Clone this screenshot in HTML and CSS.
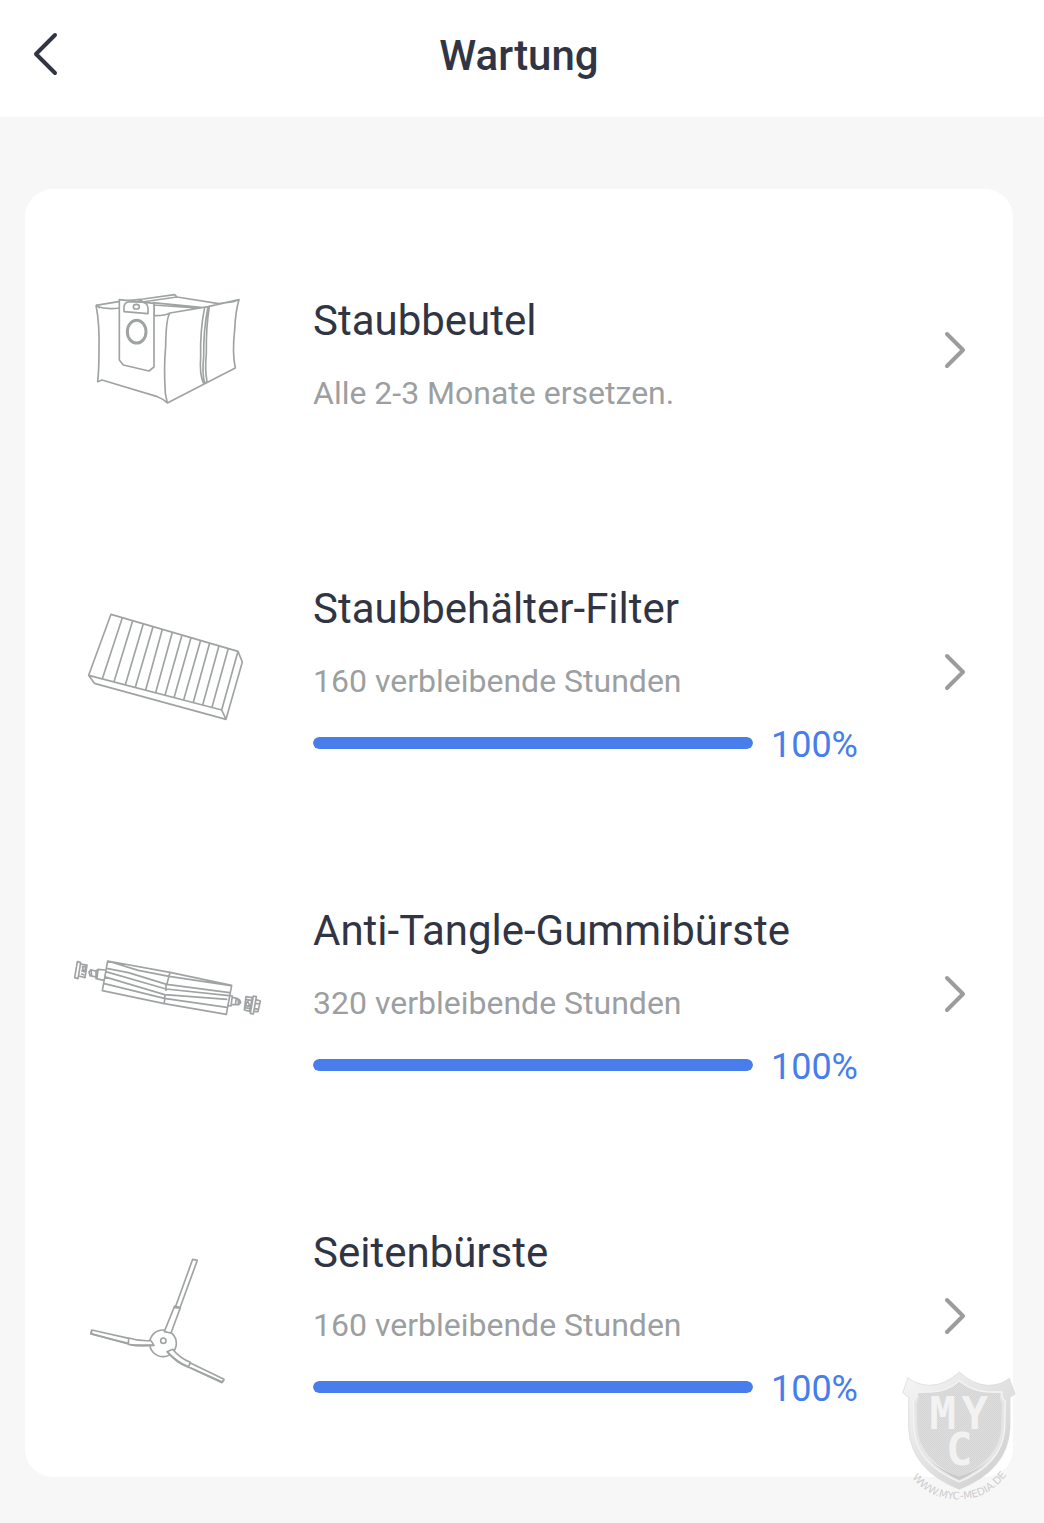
FILE: index.html
```html
<!DOCTYPE html>
<html lang="de">
<head>
    <meta charset="UTF-8">
    <meta name="viewport" content="width=device-width, initial-scale=1.0">
    <title>Wartung</title>
    <link rel="stylesheet" href="styles.css">
</head>
<body>
    <header class="header">
        <button type="button" class="back-btn" aria-label="Zurück">
            <svg width="26" height="44" viewBox="0 0 26 44"><path d="M23 3 L4 22 L23 41"/></svg>
        </button>
        <h1>Wartung</h1>
    </header>

    <main class="card">
        <!-- Dust bag -->
        <a href="#staubbeutel" class="item">
            <svg class="item-icon" viewBox="0 0 600 480">
                <g transform="translate(36 30)">
                    <path d="M48 76 Q59 130 57 210 Q57 270 53 305 L66 300 L232 350 Q252 358 262 369 L374 311 L466 264 Q456 220 464 150 Q466 95 477 59 L384 80 L270 99 Q253 108 222 107 M48 76 L120 64 M50 79 Q78 90 120 84 M48 74 L60 84 M222 107 L222 70 M120 64 L190 57 L284 44 L291 51 L186 66 M291 51 L416 71 L460 65 L477 59 M218 68 L370 83 M220 75 L350 84 M172 59 L188 62 M270 99 Q258 112 257 200 Q251 260 256 340 L262 369"/>
                    <path d="M384 80 Q370 150 371 230 Q366 280 374 311 M374 82 Q360 150 362 230 Q358 285 371 311 M374 311 L381 304 Q374 270 379 220 Q378 140 388 80"/>
                    <path class="filled" d="M118 59 L118 240 L130 255 L207 273 L222 261 L222 70 Z"/>
                    <path d="M132 95 L132 80 Q134 66 148 66 L184 66 Q202 67 204 84 L204 101 Z"/>
                    <ellipse cx="169" cy="80" rx="9" ry="7"/>
                    <ellipse class="ring" cx="170" cy="155" rx="28" ry="34"/>
                </g>
            </svg>
            <div class="item-body">
                <h2>Staubbeutel</h2>
                <p>Alle 2-3 Monate ersetzen.</p>
            </div>
            <svg class="chevron" viewBox="0 0 24 40"><path d="M4 4 L20 20 L4 36"/></svg>
        </a>

        <!-- Filter -->
        <a href="#filter" class="item">
            <svg class="item-icon" viewBox="0 0 600 480">
                <g transform="translate(21 24)">
                    <path d="M108 43 L489 154 L502 186 L453 358 L58 250 L41 226 Z M41 226 L440 330 L453 358 M489 154 L440 330"/>
                    <path d="M142 53 L82 236 M173 62 L117 245 M205 71 L151 254 M234 80 L181 262 M262 88 L212 270 M292 97 L242 278 M321 105 L270 286 M348 113 L297 293 M377 121 L326 300 M404 129 L355 307 M432 137 L383 315 M460 145 L411 322"/>
                </g>
            </svg>
            <div class="item-body">
                <h2>Staubbehälter-Filter</h2>
                <p id="filterLabel">160 verbleibende Stunden</p>
                <div class="level">
                    <progress value="100" max="100" aria-labelledby="filterLabel"></progress>
                    <span>100%</span>
                </div>
            </div>
            <svg class="chevron" viewBox="0 0 24 40"><path d="M4 4 L20 20 L4 36"/></svg>
        </a>

        <!-- Main brush -->
        <a href="#gummibuerste" class="item">
            <svg class="item-icon" viewBox="0 0 600 480">
                <g transform="translate(-9 93)">
                    <path d="M128 48 L315 82 L500 121 L484 208 L298 176 L112 137 Z M128 48 L220 76 L312 94 L498 122 M315 82 L305 120 M125 70 L190 83 L305 118 L494 143 M122 80 L303 132 L492 152 M117 95 L299 149 L487 163 M115 115 L298 160 L486 187 M303 118 L303 138 M300 148 L298 176"/>
                    <path d="M121 75 L99 73 L93 78 L93 101 L117 106 M93 79 L78 74 L72 81 L75 92 L93 96 M99 73 L96 100 M78 74 L80 92"/>
                    <path d="M37 50 L47 53 L39 101 L29 98 Z M47 57 L66 60 L60 98 L41 93 M51 64 L62 65 L60 77 L50 75 M49 78 L60 81 M48 86 L58 90 M52 64 L56 80"/>
                    <path d="M492 151 L502 153 L498 183 L487 181 M502 157 L516 160 L524 165 L527 172 L521 179 L501 179 M514 160 L511 179 M518 162 L522 176 M523 166 L519 177"/>
                    <path d="M543 155 L562 158 L554 199 L538 195 Z M543 163 L558 166 M548 168 L555 184 L541 182 Z M540 188 L555 191 M565 153 L574 155 L565 207 L556 205 Z M573 164 L586 168 L579 200 L566 199 M573 175 L584 177 M570 191 L580 193"/>
                </g>
            </svg>
            <div class="item-body">
                <h2>Anti-Tangle-Gummibürste</h2>
                <p id="brushLabel">320 verbleibende Stunden</p>
                <div class="level">
                    <progress value="100" max="100" aria-labelledby="brushLabel"></progress>
                    <span>100%</span>
                </div>
            </div>
            <svg class="chevron" viewBox="0 0 24 40"><path d="M4 4 L20 20 L4 36"/></svg>
        </a>

        <!-- Side brush -->
        <a href="#seitenbuerste" class="item">
            <svg class="item-icon" viewBox="0 0 600 480">
                <g transform="translate(21 27)">
                    <circle cx="264" cy="295" r="40"/>
                    <circle cx="265" cy="287" r="8"/>
                    <path class="filled" d="M268 260 L299 183 L316 188 L288 264 Z M302 184 L353 43 L367 46 L315 188 Z"/>
                    <path class="filled" d="M161 279 Q192 289 228 287 L237 301 Q192 305 160 298 Z M162 280 L50 255 L48 266 L160 297"/>
                    <path class="filled" d="M276 320 L293 313 Q315 340 346 352 L340 367 Q302 352 276 320 Z M346 354 L447 403 L441 413 L340 366"/>
                    <path d="M50 258 L48 267 L160 295 M168 300 L236 300 M278 321 Q306 351 338 364 M346 368 L442 411 L447 405 M296 188 L318 189"/>
                </g>
            </svg>
            <div class="item-body">
                <h2>Seitenbürste</h2>
                <p id="sideLabel">160 verbleibende Stunden</p>
                <div class="level">
                    <progress value="100" max="100" aria-labelledby="sideLabel"></progress>
                    <span>100%</span>
                </div>
            </div>
            <svg class="chevron" viewBox="0 0 24 40"><path d="M4 4 L20 20 L4 36"/></svg>
        </a>
    </main>

    <!-- Watermark -->
    <svg class="watermark" viewBox="0 0 420 450">
        <defs>
            <linearGradient id="rim" x1="0" y1="0" x2="1" y2="1">
                <stop offset="0" stop-color="#f6f6f6"/>
                <stop offset="0.5" stop-color="#e2e2e2"/>
                <stop offset="1" stop-color="#cccccc"/>
            </linearGradient>
            <pattern id="mesh" width="6" height="6" patternUnits="userSpaceOnUse">
                <rect width="6" height="6" fill="#dcdcdc"/>
                <circle cx="2" cy="2" r="1" fill="#c6c6c6"/>
                <circle cx="5" cy="5" r="1" fill="#cccccc"/>
            </pattern>
            <path id="arc" d="M54 334 Q106 418 205 418 Q306 418 362 326"/>
        </defs>
        <path d="M208 36 Q165 76 118 76 Q78 74 54 53 L38 98 L56 112 L56 205 Q62 330 208 388 Q354 330 360 205 L360 112 L375 102 L358 55 Q332 76 294 76 Q248 74 208 36 Z" fill="url(#rim)" stroke="#d6d6d6" stroke-width="2"/>
        <path d="M208 62 Q170 96 122 96 L80 96 Q84 110 70 124 L72 205 Q78 312 208 366 Q338 312 344 205 L346 124 Q332 110 336 96 L294 96 Q246 94 208 62 Z" fill="#e6e6e6" stroke="#f4f4f4" stroke-width="4"/>
        <path d="M208 66 Q170 98 122 98 L84 100 Q90 116 80 130 L82 205 Q90 300 208 352 Q326 300 334 205 L336 130 Q326 116 332 100 L294 98 Q246 96 208 66 Z" fill="url(#mesh)"/>
        <path d="M118 300 Q156 336 208 360 Q260 336 298 300 Q258 334 208 350 Q158 334 118 300 Z" fill="#c8c8c8"/>
        <g class="mark">
            <text x="158" y="206">M</text>
            <text x="254" y="206">Y</text>
            <text x="208" y="316">C</text>
        </g>
        <text class="mark-url"><textPath href="#arc" startOffset="50%">WWW.MYC-MEDIA.DE</textPath></text>
    </svg>
</body>
</html>
```
FILE: styles.css
```css
* {
    box-sizing: border-box;
}

body {
    position: relative;
    margin: 0;
    padding-bottom: 46px;
    background-color: #f7f7f7;
    font-family: Roboto, sans-serif;
    color: #313543;
}

.header {
    display: grid;
    grid-template-columns: 44px 1fr 44px;
    align-items: center;
    height: 117px;
    padding: 0 31px 6px 25px;
    background-color: #fff;
}

.header h1 {
    margin: 0;
    font-size: 42px;
    line-height: 56px;
    font-weight: 500;
    text-align: center;
}

.back-btn {
    display: flex;
    padding: 0 0 4px 7px;
    border: none;
    background: none;
    cursor: pointer;
}

.back-btn path {
    fill: none;
    stroke: #313543;
    stroke-width: 4;
    stroke-linecap: round;
    stroke-linejoin: round;
}

.card {
    margin: 72px 31px 0 25px;
    background-color: #fff;
    border-radius: 28px;
}

.item {
    display: flex;
    align-items: center;
    min-height: 322px;
    padding: 0 46px 0 43px;
    color: inherit;
    text-decoration: none;
}

.item-icon {
    flex: none;
    width: 200px;
    height: 160px;
    margin-right: 45px;
    fill: none;
    stroke: #a0a3a4;
    stroke-width: 5;
    stroke-linejoin: round;
}

.item-icon .ring {
    stroke-width: 9;
}

.item-icon .filled {
    fill: #fff;
}

.item-body {
    flex: 1;
}

.item-body h2 {
    margin: 0;
    font-size: 42px;
    line-height: 60px;
    font-weight: 400;
}

.item-body p {
    margin: 25px 0 0;
    font-size: 32px;
    line-height: 34px;
    color: #9c9fa1;
}

.level {
    display: flex;
    align-items: center;
    gap: 18px;
    margin-top: 27px;
    font-size: 36px;
    line-height: 40px;
    color: #477eeb;
}

.level progress {
    flex: 1;
    width: 0;
    height: 12px;
    margin-bottom: 4px;
    border: none;
    border-radius: 6px;
    overflow: hidden;
    background-color: #e6e8ec;
    appearance: none;
}

.level progress::-webkit-progress-bar {
    background-color: #e6e8ec;
}

.level progress::-webkit-progress-value {
    background-color: #477eeb;
    border-radius: 6px;
}

.chevron {
    flex: none;
    width: 24px;
    height: 40px;
    margin-left: 85px;
    fill: none;
    stroke: #9c9c9c;
    stroke-width: 4;
    stroke-linecap: round;
    stroke-linejoin: round;
}

.watermark {
    position: absolute;
    right: 14px;
    bottom: 13px;
    width: 140px;
    height: 150px;
    pointer-events: none;
}

.mark {
    font-family: "DejaVu Sans Mono", monospace;
    font-size: 132px;
    font-weight: 700;
    text-anchor: middle;
    fill: #f2f2f2;
}

.mark-url {
    font-family: "DejaVu Sans", sans-serif;
    font-size: 31px;
    text-anchor: middle;
    fill: #cdcdcd;
}
```
